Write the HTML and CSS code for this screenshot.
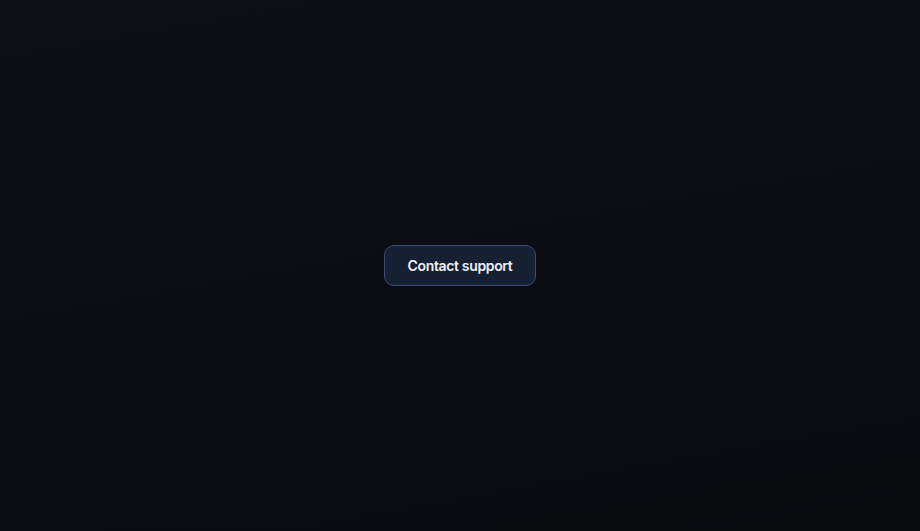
FILE: index.html
```html
<!DOCTYPE html>
<html lang="en">
<head>
<meta charset="utf-8">
<title>Contact support</title>
<link rel="stylesheet" href="styles.css">
</head>
<body>
<main class="stage">
  <button class="support-btn" type="button">Contact support</button>
</main>
</body>
</html>
```
FILE: styles.css
```css
html, body {
  margin: 0;
  padding: 0;
  height: 100%;
}
body {
  background: linear-gradient(170deg, #0d0f17 0%, #0b0d13 50%, #0a0b0f 100%);
  font-family: Inter, "Noto Sans", sans-serif;
}
.stage {
  height: 100%;
  display: flex;
  align-items: center;
  justify-content: center;
}
.support-btn {
  box-sizing: border-box;
  width: 152px;
  height: 41px;
  background: #162033;
  border: 1px solid #3d4c77;
  border-radius: 10px;
  color: #eef1f7;
  font-family: Inter, "Noto Sans", sans-serif;
  font-size: 14px;
  font-weight: 600;
  letter-spacing: -0.35px;
  padding: 0;
  cursor: pointer;
}
```
